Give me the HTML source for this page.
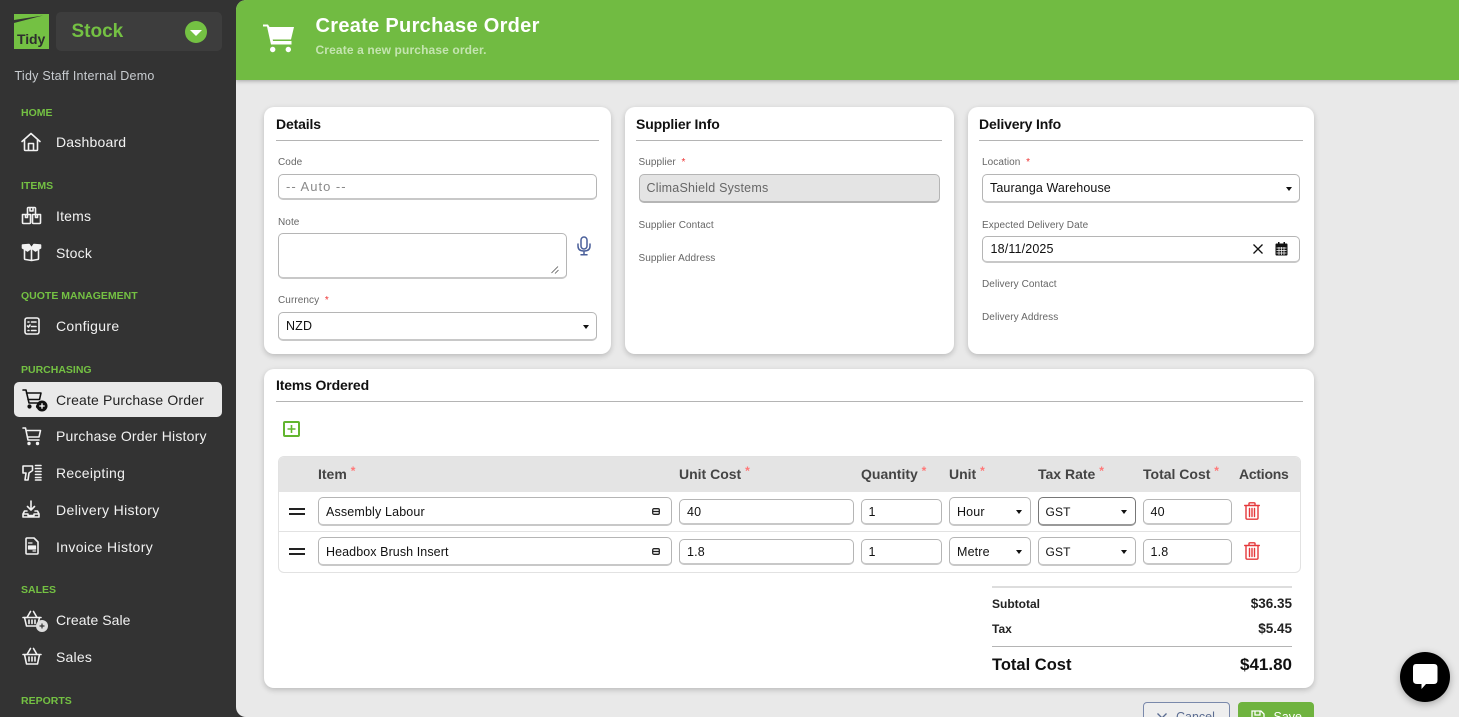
<!DOCTYPE html>
<html><head><meta charset="utf-8"><title>Create Purchase Order</title>
<style>
html,body{margin:0;padding:0;width:1459px;height:717px;overflow:hidden;background:#333}
body{font-family:"Liberation Sans",sans-serif;position:relative}
.t{position:absolute;white-space:nowrap;line-height:20px;height:20px}
.b{position:absolute;box-sizing:border-box}
.nav{color:#f2f2f2;font-size:14px;letter-spacing:.2px}
.sec{color:#74c143;font-size:10.5px;font-weight:bold;letter-spacing:0}
.card{background:#fff;border-radius:10px;box-shadow:0 2px 6px rgba(0,0,0,.2)}
.h{font-weight:bold;font-size:14px;color:#111;letter-spacing:-.15px}
.hr{height:1px;background:#b4b4b4}
.l{font-size:10px;color:#666;letter-spacing:.08px}
.r{color:#e33}
.in{background:#fff;border:1px solid #b5b5b5;border-bottom:2px solid #c8c8c8;border-radius:5px}
.v{font-size:12.5px;color:#111;letter-spacing:.15px}
.th{font-size:14px;font-weight:bold;color:#444;letter-spacing:0}
.st{color:#f77;font-size:12px;font-weight:bold;position:relative;top:-4px}
.car{position:absolute;width:0;height:0;border-left:3.5px solid transparent;border-right:3.5px solid transparent;border-top:4px solid #111}
svg{position:absolute;overflow:visible}
.ic{fill:none;stroke:#f2f2f2;stroke-width:1.6;stroke-linecap:round;stroke-linejoin:round}
</style></head><body>

<!-- Sidebar -->
<div class="b" style="left:14px;top:14px;width:35px;height:35px;background:#74c143"></div>
<svg style="left:14px;top:14px" width="35" height="35"><path d="M0 6L29 1.500L0 9Z" fill="#333"/></svg>
<div class="t" style="left:17px;top:28.500px;font-size:14px;font-weight:bold;color:#2e2e2e;letter-spacing:-.1px">Tidy</div>
<div class="b" style="left:56px;top:12px;width:166px;height:39px;background:#3d3d3d;border-radius:5px"></div>
<div class="t" style="left:71.500px;top:22px;font-size:19px;font-weight:bold;color:#74c143">Stock</div>
<div class="b" style="left:184.500px;top:20.500px;width:22.500px;height:22.500px;background:#74c143;border-radius:50%"></div>
<div class="car" style="left:190px;top:29.500px;border-left-width:6px;border-right-width:6px;border-top:6px solid #fff"></div>
<div class="t" style="left:14.500px;top:66px;font-size:12.500px;color:#c8ccd0;letter-spacing:.25px">Tidy Staff Internal Demo</div>

<div class="t sec" style="left:21px;top:103px">HOME</div>
<svg style="left:21px;top:132px" width="20" height="20" class="ic"><path d="M1 9.500L10 1.500L19 9.500M3.500 8V17.500Q3.500 18.500 4.500 18.500H15.500Q16.500 18.500 16.500 17.500V8M7.500 18V11.500H12.500V18"/></svg>
<div class="t nav" style="left:56px;top:132px">Dashboard</div>

<div class="t sec" style="left:21px;top:176px">ITEMS</div>
<svg style="left:21px;top:206px" width="21" height="19" class="ic"><path d="M6.500 8V2.500Q6.500 1.500 7.500 1.500H13.500Q14.500 1.500 14.500 2.500V8M9 1.500V5H12V1.500M1.500 8.500H9.500V16.500Q9.500 17.500 8.500 17.500H2.500Q1.500 17.500 1.500 16.500ZM11.500 8.500H19.500V16.500Q19.500 17.500 18.500 17.500H12.500Q11.500 17.500 11.500 16.500ZM4.500 8.500V11.500H6.500V8.500M14.500 8.500V11.500H16.500V8.500"/></svg>
<div class="t nav" style="left:56px;top:206px">Items</div>
<svg style="left:21px;top:243px" width="21" height="19" class="ic"><path d="M3.500 7V15.500Q3.500 16.500 4.500 16.500L10.500 17.500L16.500 16.500Q17.500 16.500 17.500 15.500V7M10.500 6V17.500"/><path d="M1.500 2L8 1.500L10.500 5L6.500 8L1.500 5ZM19.500 2L13 1.500L10.500 5L14.500 8L19.500 5Z" fill="#f2f2f2"/></svg>
<div class="t nav" style="left:56px;top:243px">Stock</div>

<div class="t sec" style="left:21px;top:286px">QUOTE MANAGEMENT</div>
<svg style="left:24px;top:317px" width="16" height="18" class="ic"><rect x="1" y="1" width="14" height="16" rx="2"/><path d="M4 5H5M7.500 5H12M3.500 9L4.500 10L6 8M7.500 9.500H12M4 13.500H5M7.500 13.500H12"/></svg>
<div class="t nav" style="left:56px;top:316px;letter-spacing:.3px">Configure</div>

<div class="t sec" style="left:21px;top:360px">PURCHASING</div>
<div class="b" style="left:14px;top:382px;width:208px;height:35px;background:#e9e9e9;border-radius:5px"></div>
<svg style="left:22px;top:389px" width="26" height="24" fill="none" stroke="#111" stroke-width="1.600" stroke-linecap="round" stroke-linejoin="round"><path d="M1 1H4L7 14H17.500M4.500 4H19L17.500 10.500H6"/><circle cx="7.500" cy="17.500" r="1.300" fill="#111"/><circle cx="16" cy="17.500" r="1.300" fill="#111"/><circle cx="20" cy="17" r="5.500" fill="#111" stroke="none"/><path d="M17.800 17H22.200M20 14.800V19.200" stroke="#fff" stroke-width="1.300"/></svg>
<div class="t nav" style="left:56px;top:389.500px;color:#222;letter-spacing:.15px">Create Purchase Order</div>

<svg style="left:22px;top:427px" width="20" height="19" class="ic"><path d="M1 1H3.500L6 13H17M4 3.500H18.500L17 10H5.500"/><circle cx="7" cy="16.500" r=".9" fill="#f2f2f2"/><circle cx="15.500" cy="16.500" r=".9" fill="#f2f2f2"/></svg>
<div class="t nav" style="left:56px;top:426px">Purchase Order History</div>

<svg style="left:22px;top:464px" width="20" height="18" class="ic" stroke-width="1.400"><path d="M1 2H10.500V6.500L7 9L6 16H3L4 9H1ZM13.500 1.500H19M13.500 4.500H19M13.500 7.500H19M13.500 10.500H19M13.500 13.500H19M13.500 16H19"/></svg>
<div class="t nav" style="left:56px;top:463px;letter-spacing:.3px">Receipting</div>

<svg style="left:22px;top:500px" width="18" height="18" class="ic" stroke-width="1.500"><path d="M9 1V9.500M5.500 6.500L9 10L12.500 6.500M5 11H2.500L1 14V17H17V14L15.500 11H13M1 14H6V15.500H12V14H17"/></svg>
<div class="t nav" style="left:56px;top:500px;letter-spacing:.35px">Delivery History</div>

<svg style="left:25px;top:537px" width="14" height="18" class="ic"><path d="M1 2Q1 1 2 1H9L13 5V16Q13 17 12 17H2Q1 17 1 16Z"/><path d="M3.500 6H7M3.500 9H10.500V12H3.500ZM8 14H10.500" fill="#f2f2f2" stroke-width="1.200"/></svg>
<div class="t nav" style="left:56px;top:537px;letter-spacing:.35px">Invoice History</div>

<div class="t sec" style="left:21px;top:580px">SALES</div>
<svg style="left:22px;top:610px" width="27" height="23" class="ic"><path d="M1 7.500H19M2.500 7.500L4.500 16H15.500L17.500 7.500M5 7.500L8.500 1.500M15 7.500L11.500 1.500M7 10V13.500M10 10V13.500M13 10V13.500"/><circle cx="20" cy="16" r="6" fill="#ddd" stroke="none"/><path d="M18 16H22M20 14V18" stroke="#333" stroke-width="1.200"/></svg>
<div class="t nav" style="left:56px;top:610px;letter-spacing:.05px">Create Sale</div>
<svg style="left:22px;top:647px" width="20" height="19" class="ic"><path d="M1 7.500H19M2.500 7.500L4.500 17H15.500L17.500 7.500M5 7.500L8.500 1.500M15 7.500L11.500 1.500M7 10V14M10 10V14M13 10V14"/></svg>
<div class="t nav" style="left:56px;top:647px">Sales</div>
<div class="t sec" style="left:21px;top:691px">REPORTS</div>

<!-- Main -->
<div class="b" style="left:236px;top:0;width:1223px;height:717px;background:#e9e9e9;border-radius:10px 0 0 10px;overflow:hidden">
<div class="b" style="left:0;top:0;width:1223px;height:80px;background:#71bb42;box-shadow:0 1px 4px rgba(0,0,0,.3)"></div>
</div>
<svg style="left:263px;top:24px" width="32" height="29" fill="#fff"><path d="M0 .5H5L6.500 3H31L28 15.500H9.700L10 17H28.500V20.500H8L4 2.500H0Z"/><circle cx="9.700" cy="25.500" r="2.700"/><circle cx="25.300" cy="25.500" r="2.700"/></svg>
<div class="t" style="left:315.500px;top:15.500px;font-size:20px;font-weight:bold;color:#fff;letter-spacing:.3px">Create Purchase Order</div>
<div class="t" style="left:315.500px;top:40px;font-size:12px;font-weight:bold;color:#c4e4b0;letter-spacing:.13px">Create a new purchase order.</div>

<!-- Details -->
<div class="b card" style="left:264px;top:107px;width:347px;height:247px"></div>
<div class="t h" style="left:276px;top:113.500px">Details</div>
<div class="b hr" style="left:276px;top:140px;width:323px"></div>
<div class="t l" style="left:278px;top:153px">Code</div>
<div class="b in" style="left:278px;top:174px;width:319px;height:26px"></div>
<div class="t" style="left:286px;top:177px;font-size:13px;color:#8a8a8a;letter-spacing:1px">-- Auto --</div>
<div class="t l" style="left:278px;top:213px">Note</div>
<div class="b in" style="left:278px;top:233px;width:289px;height:46px"></div>
<svg style="left:550px;top:265px" width="10" height="10" stroke="#555" stroke-width=".8"><path d="M1.500 8L8 1.500M5 8.500L8.500 5"/></svg>
<svg style="left:577px;top:236px" width="14" height="20" fill="none" stroke="#4a5f9a" stroke-width="1.500" stroke-linecap="round"><rect x="4" y="1" width="6" height="12" rx="3"/><path d="M1 8V10Q1 15 7 15Q13 15 13 10V8M7 15V18.500M4 18.800H10"/></svg>
<div class="t l" style="left:278px;top:291px">Currency <span class="r">&nbsp;*</span></div>
<div class="b in" style="left:278px;top:311.500px;width:319px;height:29px"></div>
<div class="t v" style="left:286px;top:316px">NZD</div>
<div class="car" style="left:583px;top:324.500px"></div>

<!-- Supplier -->
<div class="b card" style="left:625px;top:107px;width:329px;height:247px"></div>
<div class="t h" style="left:636px;top:113.500px">Supplier Info</div>
<div class="b hr" style="left:636px;top:140px;width:306px"></div>
<div class="t l" style="left:638.500px;top:153px">Supplier <span class="r">&nbsp;*</span></div>
<div class="b in" style="left:639px;top:174px;width:301px;height:29px;background:#e4e4e4;border-color:#b5b5b5"></div>
<div class="t v" style="left:646.500px;top:178px;color:#666;letter-spacing:.2px">ClimaShield Systems</div>
<div class="t l" style="left:638.500px;top:216px">Supplier Contact</div>
<div class="t l" style="left:638.500px;top:249px">Supplier Address</div>

<!-- Delivery -->
<div class="b card" style="left:968px;top:107px;width:346px;height:247px"></div>
<div class="t h" style="left:979px;top:113.500px">Delivery Info</div>
<div class="b hr" style="left:979px;top:140px;width:324px"></div>
<div class="t l" style="left:982px;top:153px">Location <span class="r">&nbsp;*</span></div>
<div class="b in" style="left:982px;top:174px;width:318px;height:29px"></div>
<div class="t v" style="left:990px;top:178px;letter-spacing:.1px">Tauranga Warehouse</div>
<div class="car" style="left:1286px;top:187px"></div>
<div class="t l" style="left:982px;top:216px">Expected Delivery Date</div>
<div class="b in" style="left:982px;top:236px;width:318px;height:27px"></div>
<div class="t v" style="left:990.500px;top:238.500px">18/11/2025</div>
<svg style="left:1253px;top:244px" width="10" height="10" stroke="#111" stroke-width="1.300"><path d="M.5.500L9.500 9.500M9.500.500L.5 9.500"/></svg>
<svg style="left:1275px;top:242px" width="13" height="14"><path d="M1.500 1.500H3V0H4.500V1.500H8.500V0H10V1.500H11.500Q12.500 1.500 12.500 2.500V12.500Q12.500 13.500 11.500 13.500H1.500Q.5 13.500 .5 12.500V2.500Q.5 1.500 1.500 1.500Z" fill="#111"/><path d="M1.500 6H11.500M1.500 8.500H11.500M1.500 11H11.500M4 5V13M6.500 5V13M9 5V13" stroke="#fff" stroke-width=".7"/></svg>
<div class="t l" style="left:982px;top:275px">Delivery Contact</div>
<div class="t l" style="left:982px;top:308px">Delivery Address</div>

<!-- Items -->
<div class="b card" style="left:264px;top:369px;width:1050px;height:319px"></div>
<div class="t h" style="left:276px;top:375px">Items Ordered</div>
<div class="b hr" style="left:276px;top:401px;width:1027px"></div>
<div class="b" style="left:283px;top:421px;width:16.500px;height:16px;border:2px solid #62b52f;border-radius:2px"></div>
<svg style="left:283px;top:421px" width="17" height="16" stroke="#62b52f" stroke-width="1.600"><path d="M4.500 8H12.500M8.500 4V12"/></svg>

<div class="b" style="left:278px;top:456px;width:1022.500px;height:116.500px;border:1px solid #e2e2e2;border-radius:6px;overflow:hidden">
  <div class="b" style="left:0;top:0;width:100%;height:35px;background:#e4e4e4"></div>
  <div class="b" style="left:0;top:74px;width:100%;height:1px;background:#e2e2e2"></div>
</div>
<div class="t th" style="left:318px;top:464px">Item <span class="st">*</span></div>
<div class="t th" style="left:679px;top:464px">Unit Cost <span class="st">*</span></div>
<div class="t th" style="left:861px;top:464px">Quantity <span class="st">*</span></div>
<div class="t th" style="left:949px;top:464px">Unit <span class="st">*</span></div>
<div class="t th" style="left:1038px;top:464px">Tax Rate <span class="st">*</span></div>
<div class="t th" style="left:1143px;top:464px">Total Cost <span class="st">*</span></div>
<div class="t th" style="left:1239px;top:464px;letter-spacing:-.25px">Actions</div>

<!-- Row 1 -->
<div class="b" style="left:289px;top:507.500px;width:16px;height:2px;background:#222"></div>
<div class="b" style="left:289px;top:512.500px;width:16px;height:2px;background:#222"></div>
<div class="b in" style="left:318px;top:497px;width:354px;height:29px"></div>
<div class="t v" style="left:326px;top:501.500px">Assembly Labour</div>
<svg style="left:652px;top:508px" width="8" height="7" fill="none" stroke="#222" stroke-width="1.300"><rect x=".7" y=".7" width="6.600" height="5.600" rx="1.200"/><path d="M1 3.500H7"/></svg>
<div class="b in" style="left:679px;top:498.500px;width:175px;height:26.500px"></div>
<div class="t v" style="left:687px;top:501.500px">40</div>
<div class="b in" style="left:861px;top:498.500px;width:81px;height:26.500px"></div>
<div class="t v" style="left:868.500px;top:501.500px">1</div>
<div class="b in" style="left:949px;top:497px;width:81.500px;height:29px"></div>
<div class="t v" style="left:957px;top:501.500px;font-size:12.500px">Hour</div>
<div class="car" style="left:1016px;top:509.500px"></div>
<div class="b in" style="left:1038px;top:497px;width:97.500px;height:29px;border-color:#777;border-bottom-color:#999"></div>
<div class="t v" style="left:1045.500px;top:501.500px;font-size:12px">GST</div>
<div class="car" style="left:1121px;top:509.500px"></div>
<div class="b in" style="left:1143px;top:498.500px;width:89px;height:26.500px"></div>
<div class="t v" style="left:1150.500px;top:501.500px">40</div>
<svg style="left:1244px;top:502px" width="16" height="18" fill="none" stroke="#e5383b" stroke-width="1.400" stroke-linecap="round"><path d="M.7 3.500H15.300M5 3.500V1.500Q5 .8 6 .8H10Q11 .8 11 1.500V3.500M2 3.500V16Q2 17.200 3.200 17.200H12.800Q14 17.200 14 16V3.500M5.500 6.500V14.500M8 6.500V14.500M10.500 6.500V14.500"/></svg>

<!-- Row 2 -->
<div class="b" style="left:289px;top:547.500px;width:16px;height:2px;background:#222"></div>
<div class="b" style="left:289px;top:552.500px;width:16px;height:2px;background:#222"></div>
<div class="b in" style="left:318px;top:537px;width:354px;height:29px"></div>
<div class="t v" style="left:326px;top:541.500px;letter-spacing:.08px">Headbox Brush Insert</div>
<svg style="left:652px;top:548px" width="8" height="7" fill="none" stroke="#222" stroke-width="1.300"><rect x=".7" y=".7" width="6.600" height="5.600" rx="1.200"/><path d="M1 3.500H7"/></svg>
<div class="b in" style="left:679px;top:538.500px;width:175px;height:26.500px"></div>
<div class="t v" style="left:687px;top:541.500px">1.8</div>
<div class="b in" style="left:861px;top:538.500px;width:81px;height:26.500px"></div>
<div class="t v" style="left:868.500px;top:541.500px">1</div>
<div class="b in" style="left:949px;top:537px;width:81.500px;height:29px"></div>
<div class="t v" style="left:957px;top:541.500px;font-size:12.500px">Metre</div>
<div class="car" style="left:1016px;top:549.500px"></div>
<div class="b in" style="left:1038px;top:537px;width:97.500px;height:29px"></div>
<div class="t v" style="left:1045.500px;top:541.500px;font-size:12px">GST</div>
<div class="car" style="left:1121px;top:549.500px"></div>
<div class="b in" style="left:1143px;top:538.500px;width:89px;height:26.500px"></div>
<div class="t v" style="left:1150.500px;top:541.500px">1.8</div>
<svg style="left:1244px;top:542px" width="16" height="18" fill="none" stroke="#e5383b" stroke-width="1.400" stroke-linecap="round"><path d="M.7 3.500H15.300M5 3.500V1.500Q5 .8 6 .8H10Q11 .8 11 1.500V3.500M2 3.500V16Q2 17.200 3.200 17.200H12.800Q14 17.200 14 16V3.500M5.500 6.500V14.500M8 6.500V14.500M10.500 6.500V14.500"/></svg>

<!-- Totals -->
<div class="b" style="left:992px;top:586px;width:300px;height:2px;background:#ddd"></div>
<div class="t" style="left:992px;top:593.500px;font-size:12px;font-weight:bold;color:#222">Subtotal</div>
<div class="t" style="right:167px;top:593.500px;font-size:13.500px;font-weight:bold;color:#222">$36.35</div>
<div class="t" style="left:992px;top:619px;font-size:12px;font-weight:bold;color:#222">Tax</div>
<div class="t" style="right:167px;top:619px;font-size:13.500px;font-weight:bold;color:#222">$5.45</div>
<div class="b hr" style="left:992px;top:646px;width:300px"></div>
<div class="t" style="left:992px;top:654.500px;font-size:16.500px;font-weight:bold;color:#111">Total Cost</div>
<div class="t" style="right:167px;top:654.500px;font-size:17px;font-weight:bold;color:#111">$41.80</div>

<!-- Buttons -->
<div class="b" style="left:1143px;top:702px;width:87px;height:30px;border:1.500px solid #7a89ab;border-radius:4px;background:#eee"></div>
<svg style="left:1157px;top:713px" width="10" height="10" stroke="#5a6b90" stroke-width="1.300"><path d="M.5.500L9.500 9.500M9.500.500L.5 9.500"/></svg>
<div class="t" style="left:1176px;top:707px;font-size:12.500px;color:#5a6b90">Cancel</div>
<div class="b" style="left:1238px;top:702px;width:76px;height:30px;border-radius:4px;background:#6fb33f"></div>
<svg style="left:1251px;top:710px" width="14" height="14" fill="none" stroke="#fff" stroke-width="1.300"><path d="M1 1H10L13 4V13H1ZM4 1V5H9V1"/></svg>
<div class="t" style="left:1273.500px;top:707px;font-size:12.500px;color:#fff">Save</div>

<!-- Chat -->
<div class="b" style="left:1400px;top:652px;width:50px;height:50px;background:#000;border-radius:50%;box-shadow:0 2px 8px rgba(0,0,0,.3)"></div>
<svg style="left:1413px;top:664px" width="25" height="26" fill="#fff"><path d="M3 0H21Q24.500 0 24.500 3.500V16Q24.500 20 21 20H13L8.500 25V20H4Q0 20 0 16V3.500Q0 0 3 0Z"/></svg>
</body></html>
